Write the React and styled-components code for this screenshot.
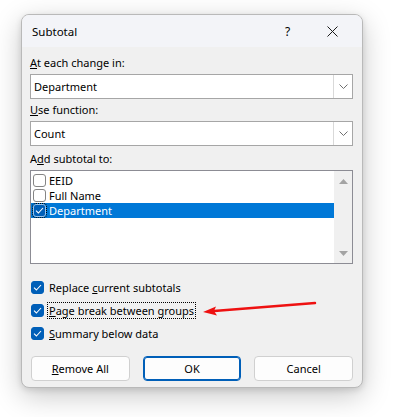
import React from 'react';
import styled, { createGlobalStyle } from 'styled-components';

const Global = createGlobalStyle`
  body {
    margin: 0;
    background: #ffffff;
    font-family: "Noto Sans", "Open Sans", sans-serif;
    font-size: 11px;
    color: #000;
  }
`;

const Page = styled.div`
  position: relative;
  width: 398px;
  height: 417px;
  padding: 14px 0 0 21px;
  box-sizing: border-box;
`;

const Dialog = styled.div`
  width: 342px;
  height: 374px;
  box-sizing: border-box;
  border: 1px solid #b9b9b9;
  border-radius: 8px;
  background: #f0f0f0;
  box-shadow: 0 8px 28px rgba(0, 0, 0, 0.22), 0 2px 6px rgba(0, 0, 0, 0.12);
  overflow: hidden;
  display: flex;
  flex-direction: column;
`;

const TitleBar = styled.div`
  height: 32px;
  background: #f3f4f8;
  display: flex;
  align-items: center;
  padding: 0 7px 0 10px;
  font-size: 11.5px;
`;

const Title = styled.span`
  flex: 1;
`;

const TitleButton = styled.span`
  width: 45px;
  display: flex;
  justify-content: center;
  align-items: center;
  font-size: 12px;
`;

const Body = styled.div`
  padding: 8px 9px 0 8px;
  display: flex;
  flex-direction: column;
`;

const Label = styled.div`
  line-height: 16px;
  margin-bottom: 3px;
  margin-top: ${p => p.$mt || 0}px;
`;

const Select = styled.div`
  height: 25px;
  box-sizing: border-box;
  border: 1px solid #a6a6a6;
  background: #fff;
  display: flex;
  align-items: stretch;
`;

const SelectValue = styled.div`
  flex: 1;
  display: flex;
  align-items: center;
  padding-left: 3px;
`;

const DropButton = styled.div`
  width: 18px;
  border-left: 1px solid #d9d9d9;
  display: flex;
  align-items: center;
  justify-content: center;
`;

const ListBox = styled.div`
  height: 94px;
  box-sizing: border-box;
  border: 1px solid #8c8c94;
  background: #fff;
  display: flex;
`;

const Items = styled.div`
  flex: 1;
  padding-top: 2px;
`;

const Item = styled.div`
  height: 15px;
  line-height: 15px;
  display: flex;
  align-items: center;
  gap: 3px;
  padding-left: 2px;
  background: ${p => p.$sel ? '#0078d7' : 'transparent'};
  color: ${p => p.$sel ? '#fff' : '#000'};
`;

const ScrollBar = styled.div`
  width: 18px;
  background: #f0f0f0;
  display: flex;
  flex-direction: column;
  justify-content: space-between;
  align-items: center;
  padding: 8px 0 7px;
`;

const Box = styled.span`
  width: 13px;
  height: 13px;
  box-sizing: border-box;
  border-radius: 3px;
  border: 1px solid ${p => p.$on ? (p.$focus ? '#9cc4ea' : '#005fb8') : '#858585'};
  background: ${p => p.$on ? '#005fb8' : '#fff'};
  display: inline-flex;
  align-items: center;
  justify-content: center;
  flex-shrink: 0;
  outline: ${p => p.$focus ? '1px dotted #000' : 'none'};
  outline-offset: 0px;
`;

const Options = styled.div`
  margin-top: 17px;
  display: flex;
  flex-direction: column;
  gap: 10px;
  padding-left: 1px;
`;

const Option = styled.div`
  display: flex;
  align-items: center;
  gap: 4px;
  height: 13px;
`;

const OptText = styled.span`
  line-height: 15px;
  padding: 0 1px;
  outline: ${p => p.$focus ? '1px dotted #000' : 'none'};
`;

const Buttons = styled.div`
  margin-top: 16px;
  display: flex;
  gap: 13px;
  padding-left: 1px;
`;

const Button = styled.div`
  width: 99px;
  height: 25px;
  box-sizing: border-box;
  border-radius: 4px;
  border: 1px solid ${p => p.$primary ? '#005fb8' : '#d0d0d0'};
  box-shadow: ${p => p.$primary ? 'inset 0 0 0 1px #005fb8' : 'none'};
  background: #fdfdfd;
  display: flex;
  align-items: center;
  justify-content: center;
`;

const Arrow = styled.svg`
  position: absolute;
  left: 0;
  top: 0;
  pointer-events: none;
`;

const Check = ({ color = '#fff' }) => (
  <svg width="9" height="7" viewBox="0 0 9 7">
    <path d="M1 3.6 L3.4 6 L8 1" fill="none" stroke={color} strokeWidth="1.1" />
  </svg>
);

const Chevron = () => (
  <svg width="9" height="5" viewBox="0 0 9 5">
    <path d="M0.5 0.5 L4.5 4.5 L8.5 0.5" fill="none" stroke="#707070" strokeWidth="1" />
  </svg>
);

const Tri = ({ up }) => (
  <svg width="9" height="5" viewBox="0 0 9 5">
    <path d={up ? 'M0 5 L4.5 0 L9 5 Z' : 'M0 0 L4.5 5 L9 0 Z'} fill="#a3a3a3" />
  </svg>
);

const CloseIcon = () => (
  <svg width="11" height="11" viewBox="0 0 11 11">
    <path d="M0.5 0.5 L10.5 10.5 M10.5 0.5 L0.5 10.5" stroke="#1a1a1a" strokeWidth="1" />
  </svg>
);

export default function App() {
  return (
    <Page>
      <Global />
      <Dialog>
        <TitleBar>
          <Title>Subtotal</Title>
          <TitleButton>?</TitleButton>
          <TitleButton><CloseIcon /></TitleButton>
        </TitleBar>
        <Body>
          <Label><u>A</u>t each change in:</Label>
          <Select>
            <SelectValue>Department</SelectValue>
            <DropButton><Chevron /></DropButton>
          </Select>
          <Label $mt={3}><u>U</u>se function:</Label>
          <Select>
            <SelectValue>Count</SelectValue>
            <DropButton><Chevron /></DropButton>
          </Select>
          <Label $mt={5}>A<u>d</u>d subtotal to:</Label>
          <ListBox>
            <Items>
              <Item><Box />EEID</Item>
              <Item><Box />Full Name</Item>
              <Item $sel><Box $on $focus><Check /></Box>Department</Item>
            </Items>
            <ScrollBar>
              <Tri up />
              <Tri />
            </ScrollBar>
          </ListBox>
          <Options>
            <Option><Box $on><Check /></Box><OptText>Replace <u>c</u>urrent subtotals</OptText></Option>
            <Option><Box $on><Check /></Box><OptText $focus><u>P</u>age break between groups</OptText></Option>
            <Option><Box $on><Check /></Box><OptText><u>S</u>ummary below data</OptText></Option>
          </Options>
          <Buttons>
            <Button><span><u>R</u>emove All</span></Button>
            <Button $primary>OK</Button>
            <Button>Cancel</Button>
          </Buttons>
        </Body>
      </Dialog>
      <Arrow width="398" height="417" viewBox="0 0 398 417">
        <line x1="315" y1="303" x2="214" y2="311" stroke="#ee1111" strokeWidth="2.5" strokeLinecap="round" />
        <path d="M203 312 L216 306.5 L214 311 L217 315.5 Z" fill="#ee1111" />
      </Arrow>
    </Page>
  );
}
